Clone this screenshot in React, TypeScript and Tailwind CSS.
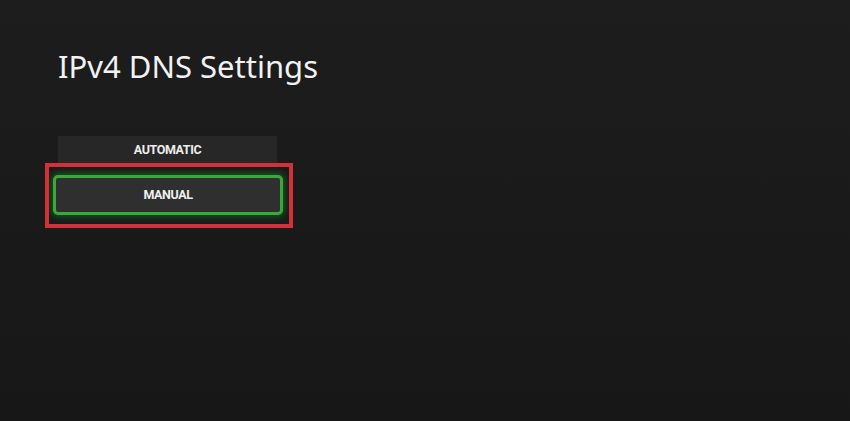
export default function App() {
  return (
    <div
      className="w-[850px] h-[421px] overflow-hidden bg-gradient-to-b from-[#1d1d1d] to-[#171717] text-white"
      style={{ fontFamily: '"Noto Sans", "Open Sans", sans-serif' }}
    >
      <div className="pt-[51px]">
        <h1 className="ml-[58px] text-[31px] leading-none font-normal text-[#f2f2f2]">
          IPv4 DNS Settings
        </h1>

        <div
          className="mt-[54px] flex flex-col"
          style={{ fontFamily: 'Roboto, "Liberation Sans", sans-serif' }}
        >
          <div className="ml-[58px] w-[219px] h-[29px] bg-[#272727] flex items-center justify-center text-[12.5px] font-bold tracking-[-0.4px] text-[#ededed]">
            AUTOMATIC
          </div>

          <div className="relative mt-[10px] ml-[53px] w-[230px]">
            <div className="h-[40px] rounded-[5px] border-[3px] border-[#3aa93c] bg-[#2f2f2f] shadow-[0_0_6px_2px_rgba(20,110,30,0.75)] flex items-center justify-center text-[12.5px] font-bold tracking-[-0.4px] text-[#f0f0f0]">
              MANUAL
            </div>
            {/* annotation box */}
            <div className="absolute -left-[8px] -top-[12px] w-[248px] h-[65px] border-[4px] border-[#d3303a] pointer-events-none" />
          </div>
        </div>
      </div>
    </div>
  );
}
